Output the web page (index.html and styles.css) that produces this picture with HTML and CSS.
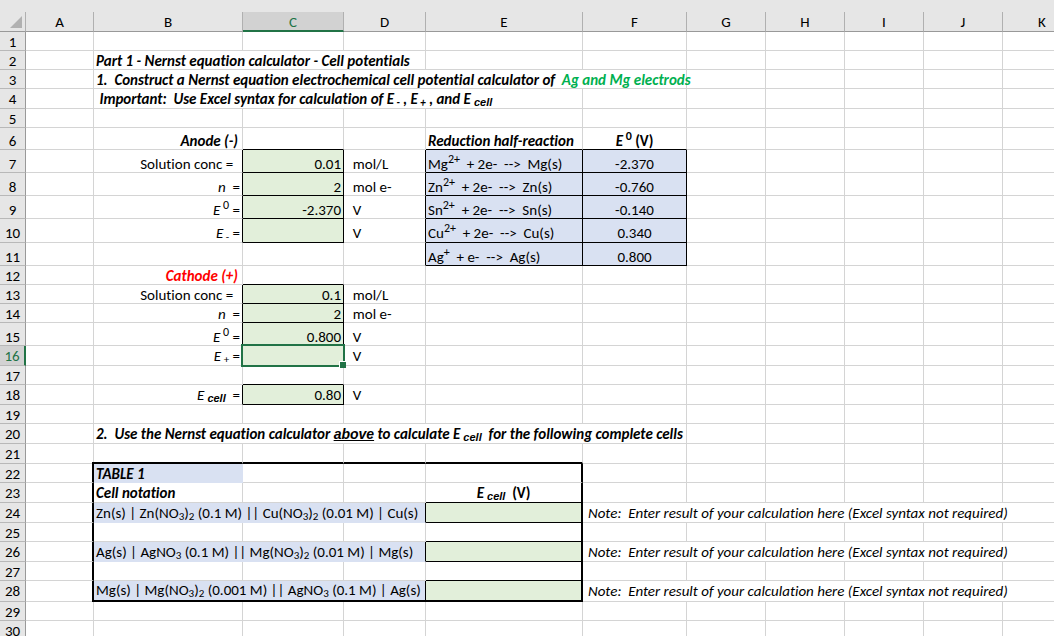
FILE: index.html
```html
<!DOCTYPE html>
<html lang="en">
<head>
    <meta charset="UTF-8">
    <meta name="viewport" content="width=device-width, initial-scale=1.0">
    <title>Nernst equation calculator</title>
    <link rel="stylesheet" href="styles.css">
</head>
<body>

    <div class="sheet">
        <table class="grid">
            <colgroup>
                <col class="col-num"><col class="col-a"><col class="col-b"><col class="col-c"><col class="col-d"><col class="col-e"><col class="col-f"><col class="col-g"><col class="col-g"><col class="col-g"><col class="col-g"><col class="col-g">
            </colgroup>
            <thead>
                <tr>
                    <th class="corner"><svg width="12" height="12" viewBox="0 0 12 12"><path d="M12 0V12H0Z" fill="#b1b1b1"/></svg></th>
                    <th>A</th><th>B</th><th class="active">C</th><th>D</th><th>E</th><th>F</th><th>G</th><th>H</th><th>I</th><th>J</th><th>K</th>
                </tr>
            </thead>
            <tbody>
                <tr><th>1</th><td></td><td></td><td></td><td></td><td></td><td></td><td></td><td></td><td></td><td></td><td></td></tr>
                <tr><th>2</th><td></td><td class="title" colspan="3">Part 1 - Nernst equation calculator - Cell potentials</td><td></td><td></td><td></td><td></td><td></td><td></td><td></td></tr>
                <tr><th>3</th><td></td><td class="title" colspan="5">1.  Construct a Nernst equation electrochemical cell potential calculator of  <span class="green-text">Ag and Mg electrods</span></td><td></td><td></td><td></td><td></td><td></td></tr>
                <tr class="h20"><th>4</th><td></td><td class="title" colspan="4"> Important:  Use Excel syntax for calculation of E<sub> -</sub> , E<sub> +</sub> , and E<sub class="arial"> cell</sub></td><td></td><td></td><td></td><td></td><td></td><td></td></tr>
                <tr><th>5</th><td></td><td></td><td></td><td></td><td></td><td></td><td></td><td></td><td></td><td></td><td></td></tr>
                <tr class="h22"><th>6</th><td></td><td class="title right indent">Anode (-)</td><td class="line-b"></td><td></td><td class="title line-b">Reduction half-reaction</td><td class="bold center line-b"><i>E</i><sup> 0</sup> (V)</td><td></td><td></td><td></td><td></td><td></td></tr>
                <tr class="h23"><th>7</th><td></td><td class="right line-r">Solution conc =  </td><td class="entry right">0.01</td><td class="line-r">  mol/L</td><td class="data">Mg<sup>2+</sup>  + 2e-  --&gt;  Mg(s)</td><td class="data center">-2.370</td><td></td><td></td><td></td><td></td><td></td></tr>
                <tr class="h23"><th>8</th><td></td><td class="right line-r"><i>n</i>  =</td><td class="entry right">2</td><td class="line-r">  mol e-</td><td class="data">Zn<sup>2+</sup>  + 2e-  --&gt;  Zn(s)</td><td class="data center">-0.760</td><td></td><td></td><td></td><td></td><td></td></tr>
                <tr class="h23"><th>9</th><td></td><td class="right line-r"><i>E</i><sup> 0</sup> =</td><td class="entry right">-2.370</td><td class="line-r">  V</td><td class="data">Sn<sup>2+</sup>  + 2e-  --&gt;  Sn(s)</td><td class="data center">-0.140</td><td></td><td></td><td></td><td></td><td></td></tr>
                <tr class="h24"><th>10</th><td></td><td class="right line-r"><i>E</i><sub> -</sub> =</td><td class="entry right"></td><td class="line-r">  V</td><td class="data">Cu<sup>2+</sup>  + 2e-  --&gt;  Cu(s)</td><td class="data center">0.340</td><td></td><td></td><td></td><td></td><td></td></tr>
                <tr class="h23"><th>11</th><td></td><td></td><td></td><td class="line-r"></td><td class="data">Ag<sup>+</sup>  + e-  --&gt;  Ag(s)</td><td class="data center">0.800</td><td></td><td></td><td></td><td></td><td></td></tr>
                <tr><th>12</th><td></td><td class="title right indent red-text">Cathode (+)</td><td class="line-b"></td><td></td><td></td><td></td><td></td><td></td><td></td><td></td><td></td></tr>
                <tr><th>13</th><td></td><td class="right line-r">Solution conc =  </td><td class="entry right">0.1</td><td>  mol/L</td><td></td><td></td><td></td><td></td><td></td><td></td><td></td></tr>
                <tr><th>14</th><td></td><td class="right line-r"><i>n</i>  =</td><td class="entry right">2</td><td>  mol e-</td><td></td><td></td><td></td><td></td><td></td><td></td><td></td></tr>
                <tr class="h23"><th>15</th><td></td><td class="right line-r"><i>E</i><sup> 0</sup> =</td><td class="entry right">0.800</td><td>  V</td><td></td><td></td><td></td><td></td><td></td><td></td><td></td></tr>
                <tr class="h20"><th class="active">16</th><td></td><td class="right"><i>E</i><sub> +</sub> =</td><td class="entry selected"></td><td>  V</td><td></td><td></td><td></td><td></td><td></td><td></td><td></td></tr>
                <tr><th>17</th><td></td><td></td><td class="line-b"></td><td></td><td></td><td></td><td></td><td></td><td></td><td></td><td></td></tr>
                <tr class="h20"><th>18</th><td></td><td class="right line-r"><i>E</i><sub class="arial"> cell</sub>  =</td><td class="entry right">0.80</td><td>  V</td><td></td><td></td><td></td><td></td><td></td><td></td><td></td></tr>
                <tr><th>19</th><td></td><td></td><td></td><td></td><td></td><td></td><td></td><td></td><td></td><td></td><td></td></tr>
                <tr class="h20"><th>20</th><td></td><td class="title" colspan="5">2.  Use the Nernst equation calculator <span class="above">above</span> to calculate E<sub class="arial"> cell</sub>  for the following complete cells</td><td></td><td></td><td></td><td></td><td></td></tr>
                <tr class="h20"><th>21</th><td></td><td class="thick-b frame-corner"></td><td class="thick-b"></td><td class="thick-b"></td><td class="thick-b"></td><td></td><td></td><td></td><td></td><td></td><td></td></tr>
                <tr><th>22</th><td class="thick-r"></td><td class="title fill">TABLE 1</td><td></td><td></td><td class="thick-r"></td><td></td><td></td><td></td><td></td><td></td><td></td></tr>
                <tr class="h20"><th>23</th><td class="thick-r"></td><td class="title">Cell notation</td><td></td><td></td><td class="bold center line-b thick-r"><i>E</i><sub class="arial"> cell</sub>  (V)</td><td></td><td></td><td></td><td></td><td></td><td></td></tr>
                <tr class="h20"><th>24</th><td class="thick-r"></td><td class="fill line-r" colspan="3">Zn(s) | Zn(NO<sub>3</sub>)<sub>2</sub> (0.1 M) || Cu(NO<sub>3</sub>)<sub>2</sub> (0.01 M) | Cu(s)</td><td class="entry thick-r"></td><td class="note" colspan="6">Note:  Enter result of your calculation here (Excel syntax not required)</td></tr>
                <tr><th>25</th><td class="thick-r"></td><td></td><td></td><td></td><td class="line-b thick-r"></td><td></td><td></td><td></td><td></td><td></td><td></td></tr>
                <tr class="h20"><th>26</th><td class="thick-r"></td><td class="fill line-r" colspan="3">Ag(s) | AgNO<sub>3</sub> (0.1 M) || Mg(NO<sub>3</sub>)<sub>2</sub> (0.01 M) | Mg(s)</td><td class="entry thick-r"></td><td class="note" colspan="6">Note:  Enter result of your calculation here (Excel syntax not required)</td></tr>
                <tr><th>27</th><td class="thick-r"></td><td></td><td></td><td></td><td class="line-b thick-r"></td><td></td><td></td><td></td><td></td><td></td><td></td></tr>
                <tr class="h21"><th>28</th><td class="thick-r"></td><td class="fill line-r thick-b frame-corner" colspan="3">Mg(s) | Mg(NO<sub>3</sub>)<sub>2</sub> (0.001 M) || AgNO<sub>3</sub> (0.1 M) | Ag(s)</td><td class="entry thick-r thick-b"></td><td class="note" colspan="6">Note:  Enter result of your calculation here (Excel syntax not required)</td></tr>
                <tr><th>29</th><td></td><td></td><td></td><td></td><td></td><td></td><td></td><td></td><td></td><td></td><td></td></tr>
                <tr><th>30</th><td></td><td></td><td></td><td></td><td></td><td></td><td></td><td></td><td></td><td></td><td></td></tr>
            </tbody>
        </table>
    </div>

</body>
</html>
```
FILE: styles.css
```css
body {
    margin: 0;
    background: #fff;
    color: #000;
    font-family: Calibri, Carlito, Lato, sans-serif;
    font-size: 15px;
    font-variant-ligatures: none;
}
.sheet {
    height: 100vh;
    padding-top: 12px;
    box-sizing: border-box;
    overflow: hidden;
    background: #e6e6e6;
}
.grid {
    width: 1082px;
    table-layout: fixed;
    border-collapse: separate;
    border-spacing: 0;
    background: #fff;
}
.col-num { width: 26px; }
.col-a { width: 68px; }
.col-b { width: 149px; }
.col-c { width: 101px; }
.col-d { width: 82px; }
.col-e { width: 157px; }
.col-f { width: 104px; }
.col-g { width: 79px; }

/* row heights */
tr { height: 19px; }
thead tr, .h20 { height: 20px; }
.h21 { height: 21px; }
.h22 { height: 22px; }
.h23 { height: 23px; }
.h24 { height: 24px; }

td, th {
    padding: 0 2px;
    line-height: 16px;
    vertical-align: bottom;
    white-space: pre;
}
td {
    border-right: 1px solid #d4d4d4;
    border-bottom: 1px solid #d4d4d4;
}
th {
    padding: 0;
    background: #e6e6e6;
    border-right: 1px solid #999;
    border-bottom: 1px solid #b8b8b8;
    font-weight: normal;
    text-align: center;
}
thead th {
    line-height: 18px;
    border-right-color: #b0b0b0;
    border-bottom-color: #999;
}
.h20 > *, .h24 > * { padding-bottom: 1px; }
.h21 > * { padding-bottom: 2px; }
.corner {
    padding-right: 3px;
    line-height: 0;
    text-align: right;
    vertical-align: middle;
}
.active {
    background: #d2d2d2;
    color: #217346;
}
thead .active {
    border-bottom: 2px solid #217346;
    line-height: 16px;
}
tbody .active {
    border-right: 2px solid #217346;
}

/* text */
sub, sup {
    font-size: 11px;
    line-height: 0;
}
sub { vertical-align: -2px; }
sup {
    font-size: 12px;
    vertical-align: 6px;
}
.title, .note { font-style: italic; }
.title, .bold { font-weight: bold; }
.center { text-align: center; }
.right { text-align: right; }
.indent { padding-right: 4px; }
.arial, .above {
    font-family: "Liberation Sans", Arial, sans-serif;
    font-weight: bold;
    font-style: italic;
}
.above {
    font-size: 14px;
    text-decoration: underline;
}
.green-text { color: #00b050; }
.red-text { color: #f00; }
.note { padding-left: 5px; }

/* fills and borders */
.fill {
    background: #d9e1f2;
    border-color: #d9e1f2;
}
.data {
    background: #d9e1f2;
    border-color: #000;
}
.entry {
    background: #e2efda;
    border-color: #000;
}
.line-r { border-right-color: #000; }
.line-b { border-bottom-color: #000; }
.thick-r { border-right: 2px solid #000; }
.thick-b { border-bottom: 2px solid #000; }

/* closes the left corners of the thick frame */
.frame-corner { position: relative; }
.frame-corner::before {
    content: "";
    position: absolute;
    left: -2px;
    bottom: -2px;
    width: 2px;
    height: 2px;
    background: #000;
}

/* selection frame with fill handle */
.selected { position: relative; }
.selected::before {
    content: "";
    position: absolute;
    inset: -2px;
    border: 2px solid #217346;
}
.selected::after {
    content: "";
    position: absolute;
    right: -3px;
    bottom: -3px;
    width: 6px;
    height: 6px;
    background: #217346;
    border-top: 1px solid #fff;
    border-left: 1px solid #fff;
}
```
